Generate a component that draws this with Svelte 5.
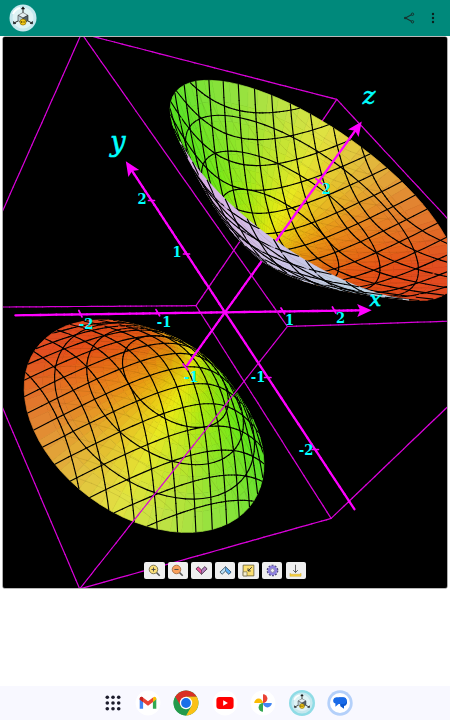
<script>
  const LIMIT = 2;
  const RIM = Math.sqrt(3);
  const AXIS = '#ff00ff';
  const BOX = '#d800d8';

  // perspective projection, w is the relative distance to the eye
  function project([x, y, z]) {
    const w = 1 + 0.07 * x + 0.054 * y - 0.0589 * z;
    return [
      225 + (62.1 * x - 40.4 * y + 41.5 * z) / w,
      312.3 + (-0.9 * x - 61.5 * y - 57.9 * z) / w,
      w
    ];
  }

  const hues = [[-180, 105], [-135, 60], [-90, 12], [-45, 13], [0, 29], [55, 66], [90, 89], [135, 103], [180, 105]];

  function hueAt(angle) {
    for (let i = 1; i < hues.length; i++) {
      const [a, h] = hues[i - 1];
      const [b, k] = hues[i];
      if (angle <= b) return h + ((k - h) * (angle - a)) / (b - a);
    }
    return 105;
  }

  function faceColor(x, y, side) {
    const r = Math.hypot(x, y);
    const t = r / RIM;
    const angle = (Math.atan2(y * side, x * side) * 180) / Math.PI;
    const f = r / Math.sqrt(2 * r * r + 1) / 0.655;
    const glow = Math.max(0, Math.cos(((angle - 60) * Math.PI) / 180)) * f * t;
    const hue = 54 + (hueAt(angle) - 54) * f;
    return `hsl(${hue.toFixed(1)} ${(90 - 14 * t - 4 * glow).toFixed(1)}% ${(47 + 4 * t + 7 * glow).toFixed(1)}%)`;
  }

  function backColor(u) {
    const t = Math.min(1, Math.max(0, (u - 200) / 140));
    return `rgb(${Math.round(220 - 30 * t)} ${Math.round(176 + 36 * t)} ${Math.round(232 - 2 * t)})`;
  }

  const items = [];
  const fmt = (p) => `${p[0].toFixed(1)} ${p[1].toFixed(1)}`;

  function addLine(points, color, width, bias = 0.012) {
    const ps = points.map(project);
    for (let i = 1; i < ps.length; i++) {
      items.push({
        d: `M${fmt(ps[i - 1])}L${fmt(ps[i])}`,
        fill: 'none',
        stroke: color,
        width,
        depth: (ps[i - 1][2] + ps[i][2]) / 2 - bias
      });
    }
  }

  function straight(a, b, steps = 40) {
    return Array.from({ length: steps + 1 }, (_, i) => a.map((v, k) => v + ((b[k] - v) * i) / steps));
  }

  // z² - x² - y² = 1, both sheets
  function buildSheet(side) {
    const at = (x, y) => [x, y, side * Math.sqrt(1 + x * x + y * y)];
    const rings = 14;
    const sectors = 72;
    const tMax = Math.asinh(RIM);
    const polar = (i, j) => {
      const r = Math.sinh((tMax * i) / rings);
      const a = (2 * Math.PI * j) / sectors;
      return at(r * Math.cos(a), r * Math.sin(a));
    };

    for (let i = 0; i < rings; i++) {
      for (let j = 0; j < sectors; j++) {
        const ps = [polar(i, j), polar(i + 1, j), polar(i + 1, j + 1), polar(i, j + 1)].map(project);
        let area = 0;
        ps.forEach((p, k) => {
          const q = ps[(k + 1) % 4];
          area += p[0] * q[1] - q[0] * p[1];
        });
        const mid = polar(i + 0.5, j + 0.5);
        const color = area < 0 ? faceColor(mid[0], mid[1], side) : backColor(ps[0][0]);
        items.push({
          d: `M${ps.map(fmt).join('L')}Z`,
          fill: color,
          stroke: color,
          width: 0.7,
          depth: ps.reduce((s, p) => s + p[2], 0) / 4
        });
      }
    }

    for (let c = -1.5; c <= 1.5; c += 0.25) {
      const end = Math.asinh(Math.sqrt(3 - c * c));
      const along = Array.from({ length: 37 }, (_, i) => Math.sinh(-end + (2 * end * i) / 36));
      addLine(along.map((v) => at(c, v)), '#000', 1.15);
      addLine(along.map((v) => at(v, c)), '#000', 1.15);
    }

    for (const z of [1.25, 1.5, 1.75]) {
      const r = Math.sqrt(z * z - 1);
      const ring = Array.from({ length: 73 }, (_, i) => {
        const a = (2 * Math.PI * i) / 72;
        return at(r * Math.cos(a), r * Math.sin(a));
      });
      addLine(ring, '#000', 1.15);
    }

    // triangulation seams
    for (let x = -1.75; x < 1.75; x += 0.25) {
      for (let y = -1.75; y < 1.75; y += 0.25) {
        if (Math.hypot(x, y + 0.25) > 1.7 || Math.hypot(x + 0.25, y) > 1.7) continue;
        addLine([at(x, y + 0.25), at(x + 0.125, y + 0.125), at(x + 0.25, y)], 'rgba(60,50,0,0.16)', 0.7, 0.008);
      }
    }
  }

  buildSheet(1);
  buildSheet(-1);

  for (const a of [-LIMIT, LIMIT]) {
    for (const b of [-LIMIT, LIMIT]) {
      addLine(straight([-LIMIT, a, b], [LIMIT, a, b]), BOX, 1.2, 0);
      addLine(straight([a, -LIMIT, b], [a, LIMIT, b]), BOX, 1.2, 0);
      addLine(straight([a, b, -LIMIT], [a, b, LIMIT]), BOX, 1.2, 0);
    }
  }

  addLine(straight([-2.73, 0, 0], [2.65, 0, 0], 60), AXIS, 2.3, 0);
  addLine(straight([0, -2.73, 0], [0, 2.65, 0], 60), AXIS, 2.3, 0);
  addLine(straight([0, 0, -2], [0, 0, 2.65], 60), AXIS, 2.3, 0);

  items.sort((p, q) => q.depth - p.depth);

  const heads = [[2.83, 0, 0], [0, 2.83, 0], [0, 0, 2.76]].map((tip) => {
    const [u, v] = project(tip);
    return { u, v, turn: (Math.atan2(v - 312.3, u - 225) * 180) / Math.PI };
  });

  const ticks = [
    'M78.8 310.5l3.2 6.4', 'M156 309.6l3.6 6.2', 'M281 308l3.6 5.8', 'M332.4 307l3.4 6',
    'M148.5 200.5h6', 'M183.5 254h6', 'M264.5 377.5h6.4', 'M312 449.5h6.4',
    'M315.8 178.6l7 5.8', 'M183 364l4.6 5.6'
  ];

  const labels = [
    { text: '-2', x: 86, y: 329 },
    { text: '-1', x: 164, y: 327 },
    { text: '1', x: 289.5, y: 325 },
    { text: '2', x: 340.5, y: 323 },
    { text: '2', x: 142, y: 204 },
    { text: '1', x: 177, y: 257 },
    { text: '-1', x: 258, y: 382 },
    { text: '-2', x: 306, y: 455 },
    { text: '2', x: 326, y: 194 },
    { text: '-1', x: 191, y: 381.5 }
  ];
</script>

{#snippet logo(size)}
  <svg class="logo" width={size} height={size} viewBox="0 0 28 28">
    <circle cx="14" cy="14" r="13.5" fill="#c5e8ee" />
    <circle cx="14" cy="14" r="10.5" fill="#dff3f5" />
    <path d="M4 10q2-5 7-6" stroke="#fff" stroke-width="2" fill="none" />
    <path d="M14 9V4M9 17l-3 1.5M19 17l3 1.5" stroke="#222" stroke-width="1" />
    <path d="M12.4 5L14 2.8 15.6 5zM4.5 17.5v2.3l2.4-.3zM23.5 17.5v2.3l-2.4-.3z" fill="#111" stroke="#111" stroke-width=".6" />
    <path d="M14 8.5l5 2.8-5 2.8-5-2.8z" fill="#e4eef2" stroke="#555" stroke-width=".6" />
    <path d="M9 11.3l5 2.8v5.4l-5-2.8z" fill="#b8cdd4" stroke="#333" stroke-width=".6" />
    <path d="M19 11.3l-5 2.8v5.4l5-2.8z" fill="#55646c" stroke="#222" stroke-width=".6" />
    <circle cx="14" cy="18" r="3.1" fill="#f2c818" stroke="#7a6000" stroke-width=".6" />
    <path d="M12.4 17v2M12.4 18h1.2M15.6 16.9l-1 1.1 1 1.1" stroke="#4d3c00" stroke-width=".7" fill="none" />
  </svg>
{/snippet}

<div class="screen">
  <header>
    {@render logo(28)}
    <div class="actions">
      <svg width="12" height="12" viewBox="0 0 12 12">
        <path d="M9.4 2.2L2.3 6l7.1 3.8" fill="none" stroke="#17332f" stroke-width="1.1" />
        <circle cx="9.5" cy="2.2" r="1.2" fill="#00897b" stroke="#17332f" />
        <circle cx="2.2" cy="6" r="1.2" fill="#17332f" />
        <circle cx="9.5" cy="9.8" r="1.2" fill="#00897b" stroke="#17332f" />
      </svg>
      <svg width="4" height="12" viewBox="0 0 4 12" fill="#0b1f1c">
        <circle cx="2" cy="2" r="1.2" /><circle cx="2" cy="6" r="1.2" /><circle cx="2" cy="10" r="1.2" />
      </svg>
    </div>
  </header>

  <main>
    <svg class="plot" width="444" height="551" viewBox="3 37 444 551">
      {#each items as item}
        <path d={item.d} fill={item.fill} stroke={item.stroke} stroke-width={item.width} />
      {/each}
      {#each ticks as tick}
        <path d={tick} fill="none" stroke={AXIS} stroke-width="1.7" />
      {/each}
      {#each heads as head}
        <path d="M0 0L-14.5 6.5L-11.5 0L-14.5 -6.5Z" fill={AXIS} transform="translate({head.u} {head.v}) rotate({head.turn})" />
      {/each}
      {#each labels as label}
        <text class="num" x={label.x} y={label.y}>{label.text}</text>
      {/each}
      <text class="name" x="375.5" y="306" font-size="21">x</text>
      <text class="name" x="118" y="151" font-size="27">y</text>
      <text class="name" x="369" y="104" font-size="24">z</text>
    </svg>

    <div class="tools">
      <button aria-label="Zoom in">
        <svg viewBox="0 0 14 14">
          <path d="M9 9l3.6 3.6" stroke="#555" stroke-width="1.6" />
          <circle cx="5.9" cy="5.9" r="4.6" fill="#fbe07a" stroke="#6b6340" stroke-width=".9" />
          <path d="M3.7 5.9h4.4M5.9 3.7v4.4" stroke="#444" />
        </svg>
      </button>
      <button aria-label="Zoom out">
        <svg viewBox="0 0 14 14">
          <path d="M9 9l3.6 3.6" stroke="#555" stroke-width="1.6" />
          <circle cx="5.9" cy="5.9" r="4.6" fill="#f9a05c" stroke="#a0683c" stroke-width=".9" />
          <path d="M3.7 5.9h4.4" stroke="#444" />
        </svg>
      </button>
      <button aria-label="Down">
        <svg viewBox="0 0 14 14">
          <path d="M1 5.2l2.4-2.2L7 6.4 10.6 3 13 5.2 7 11z" fill="#f2569d" stroke="#403040" stroke-width=".9" />
          <path d="M7 6.4L10.6 3 13 5.2 7 11z" fill="#b583c4" stroke="#403040" stroke-width=".6" />
        </svg>
      </button>
      <button aria-label="Up">
        <svg viewBox="0 0 14 14">
          <path d="M1 8.8L3.4 11 7 7.6l3.6 3.4L13 8.8 7 3z" fill="#b9dff5" stroke="#33485a" stroke-width=".9" />
          <path d="M7 7.6l3.6 3.4L13 8.8 7 3z" fill="#5cb0f6" stroke="#33485a" stroke-width=".6" />
        </svg>
      </button>
      <button aria-label="Resize">
        <svg viewBox="0 0 14 14">
          <path d="M1.2 1.2h11.6v11.6H1.2z" fill="#fbdf70" stroke="#5c5432" stroke-width=".8" />
          <path d="M1.2 8.4h4.2v4.4H1.2z" fill="#f6efcb" stroke="#5c5432" stroke-width=".6" />
          <path d="M10.5 3.5L6.7 7.3M6.5 4.6v2.9h2.9" fill="none" stroke="#333" stroke-width="1" />
        </svg>
      </button>
      <button aria-label="Settings">
        <svg viewBox="0 0 14 14">
          <circle cx="7" cy="7" r="5.3" fill="none" stroke="#514a80" stroke-width="2" stroke-dasharray="2.1 1.23" />
          <circle cx="7" cy="7" r="3.7" fill="#efefef" stroke="#8d7fe0" stroke-width="2.8" />
          <circle cx="7" cy="7" r="2.1" fill="#efefef" stroke="#514a80" stroke-width=".6" />
        </svg>
      </button>
      <button aria-label="Download">
        <svg viewBox="0 0 14 14">
          <path d="M1 10v3.2h12V10l-1.5 1h-9z" fill="#fbd23c" stroke="#b99614" stroke-width=".4" />
          <path d="M7 .8v8.4M4.5 6.6L7 9.2l2.5-2.6" fill="none" stroke="#444" stroke-width=".9" />
        </svg>
      </button>
    </div>
  </main>

  <nav>
    <svg class="grid" width="16" height="16" viewBox="0 0 16 16" fill="#1c1c2c">
      {#each [2.3, 8, 13.7] as cy}
        {#each [2.3, 8, 13.7] as cx}
          <circle {cx} {cy} r="1.8" />
        {/each}
      {/each}
    </svg>
    <svg class="app" viewBox="0 0 26 26">
      <circle cx="13" cy="13" r="12.4" fill="#fff" />
      <path d="M4.7 8.5v10.3h3.4v-7.6z" fill="#4285f4" />
      <path d="M21.3 8.5v10.3h-3.4v-7.6z" fill="#34a853" />
      <path d="M4.7 8.9c0-2 1.9-2.6 3.3-1.5l5 3.8 5-3.8v4.5l-5 3.8-5-3.8-3.3-2.5z" fill="#ea4335" />
      <path d="M4.7 8.9c0-2 1.9-2.6 3.3-1.5v4.5l-3.3-2.5z" fill="#c5221f" />
      <path d="M21.3 8.9c0-2-1.9-2.6-3.3-1.5v4.5l3.3-2.5z" fill="#fbbc04" />
    </svg>
    <svg class="app" viewBox="0 0 26 26">
      <circle cx="13" cy="13" r="12.5" fill="#34a853" />
      <path d="M13 13L2.2 6.8A12.5 12.5 0 0 1 23.8 6.8H13z" fill="#d93025" />
      <path d="M13 6.8h10.8A12.5 12.5 0 0 1 13 25.5l5.4-9.4z" fill="#fbc116" />
      <path d="M2.2 6.8l5.4 9.3 5.4-9.3z" fill="#d93025" />
      <path d="M2.2 6.8A12.5 12.5 0 0 0 13 25.5l5.4-9.4-10.8 0z" fill="#249a4c" />
      <circle cx="13" cy="13" r="6.2" fill="#fff" />
      <circle cx="13" cy="13" r="4.9" fill="#1a6fe8" />
    </svg>
    <svg class="app" viewBox="0 0 26 26">
      <circle cx="13" cy="13" r="12.4" fill="#fff" />
      <rect x="4.4" y="6.9" width="17.2" height="12.2" rx="3" fill="#f00" />
      <path d="M11.2 10.3v5.4l4.7-2.7z" fill="#fff" />
    </svg>
    <svg class="app" viewBox="0 0 26 26">
      <circle cx="13" cy="13" r="12.4" fill="#fff" />
      <path d="M13 13V4.2a4.4 4.4 0 0 1 0 8.8z" fill="#ea4335" />
      <path d="M13 13h8.8a4.4 4.4 0 0 1-8.8 0z" fill="#4285f4" />
      <path d="M13 13v8.8a4.4 4.4 0 0 1 0-8.8z" fill="#34a853" />
      <path d="M13 13H4.2a4.4 4.4 0 0 1 8.8 0z" fill="#fbbc04" />
    </svg>
    <div class="app ring">{@render logo(22)}</div>
    <svg class="app" viewBox="0 0 26 26">
      <circle cx="13" cy="13" r="12.7" fill="#b4d0fa" />
      <circle cx="13" cy="13" r="10" fill="#fff" />
      <path d="M12 7.6h3.5a4.3 4.3 0 0 1 1.5 8.4v2.8L13.4 16.2z" fill="#0b57d0" />
      <path d="M9.8 7.2h6.4a3.3 3.3 0 0 1 0 6.8h-4.6L8.4 16.8V13.6a3.3 3.3 0 0 1 1.4-6.4z" fill="#1a6be8" />
    </svg>
  </nav>
</div>

<style>
  :global(body) {
    margin: 0;
    background: #fff;
  }

  .screen {
    width: 450px;
    height: 720px;
    display: flex;
    flex-direction: column;
    overflow: hidden;
  }

  header {
    height: 36px;
    box-sizing: border-box;
    padding: 0 15px 0 8.5px;
    display: flex;
    align-items: center;
    justify-content: space-between;
    background: #00897b;
  }

  .actions {
    display: flex;
    align-items: center;
    gap: 16px;
  }

  svg {
    display: block;
    flex: none;
  }

  main {
    position: relative;
    width: 444px;
    height: 551px;
    margin: 1px 0 0 3px;
    border-radius: 2px;
    overflow: hidden;
    background: #000;
    box-shadow: 0 0 0 0.6px #777;
  }

  .plot path {
    stroke-linecap: round;
    stroke-linejoin: round;
  }

  .num {
    font-family: 'DejaVu Serif Condensed', 'DejaVu Serif', serif;
    font-stretch: condensed;
    font-weight: bold;
    font-size: 14.5px;
    fill: #0ff;
    text-anchor: middle;
  }

  .name {
    font-family: 'DejaVu Serif', serif;
    font-style: italic;
    fill: #0ff;
    stroke: #0ff;
    stroke-width: 0.6;
    text-anchor: middle;
  }

  .tools {
    position: absolute;
    left: 141px;
    bottom: 9px;
    display: flex;
    gap: 3.1px;
  }

  button {
    width: 20.5px;
    height: 17.5px;
    padding: 0;
    border: 0;
    border-radius: 2px;
    display: flex;
    align-items: center;
    justify-content: center;
    background: #efefef;
  }

  button svg {
    width: 13px;
    height: 13px;
  }

  nav {
    height: 34px;
    margin-top: auto;
    padding-left: 105px;
    display: flex;
    align-items: center;
    gap: 12.4px;
    background: #f8f8ff;
  }

  .grid {
    margin-right: 1.6px;
  }

  .app {
    width: 26px;
    height: 26px;
  }

  .ring {
    display: flex;
    align-items: center;
    justify-content: center;
    border-radius: 50%;
    background: #8fdce6;
  }
</style>
